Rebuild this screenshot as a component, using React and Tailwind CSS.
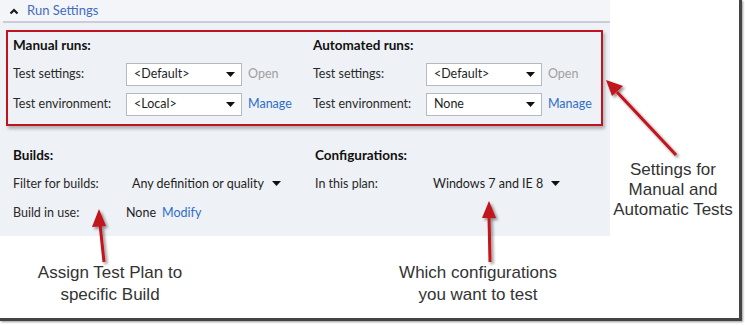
import React from "react";

const ui = { fontFamily: "Lato, 'Noto Sans', sans-serif" };
const note = { fontFamily: "'Liberation Sans', Arial, sans-serif" };

function Caret() {
  return (
    <svg width="10" height="8" viewBox="0 0 10 8">
      <polyline points="1.5,6.5 5,3 8.5,6.5" fill="none" stroke="#1a1a1a" strokeWidth="2.2" />
    </svg>
  );
}

function Tri() {
  return (
    <svg width="9" height="6" viewBox="0 0 9 6">
      <polygon points="0,0 9,0 4.5,5" fill="#111" />
    </svg>
  );
}

function Select({ value }) {
  return (
    <div className="w-[116px] h-[23px] bg-white border border-[#b5b9c0] flex items-center justify-between pl-[7px] pr-[6px] text-[#1e1e1e]">
      <span>{value}</span>
      <Tri />
    </div>
  );
}

function RunColumn({ title, env, className }) {
  return (
    <div className={"flex flex-col " + className}>
      <div className="h-[20px] flex items-center font-bold text-[13.5px] text-[#111]">{title}</div>
      <div className="mt-[8px] flex items-center h-[23px]">
        <span className="w-[113px] text-[#2a2a2a]">Test settings:</span>
        <Select value="<Default>" />
        <span className="ml-[6px] text-[#a0a0a0]">Open</span>
      </div>
      <div className="mt-[7px] flex items-center h-[23px]">
        <span className="w-[113px] text-[#2a2a2a]">Test environment:</span>
        <Select value={env} />
        <span className="ml-[6px] text-[#2f6fc9]">Manage</span>
      </div>
    </div>
  );
}

function Arrows() {
  return (
    <svg className="absolute inset-0 pointer-events-none" width="740" height="319">
      <defs>
        <filter id="sh" x="-50%" y="-50%" width="200%" height="200%">
          <feDropShadow dx="2" dy="2" stdDeviation="1.5" floodColor="#000" floodOpacity="0.45" />
        </filter>
      </defs>
      <g filter="url(#sh)" fill="#c1121f" stroke="#c1121f">
        <line x1="676" y1="155" x2="617" y2="92" strokeWidth="3" />
        <polygon points="606,80 623,86 612,96" stroke="none" />
        <line x1="104" y1="262" x2="100" y2="224" strokeWidth="3" />
        <polygon points="99,209 106,226 92,227" stroke="none" />
        <line x1="490" y1="262" x2="489" y2="216" strokeWidth="3" />
        <polygon points="489,201 496,218 482,218" stroke="none" />
      </g>
    </svg>
  );
}

export default function App() {
  return (
    <div className="w-[745px] h-[325px] bg-white">
      <div className="relative w-[742px] h-[321px] bg-white border-r-[3px] border-b-[3px] border-[#444] shadow-[1px_1px_2px_rgba(0,0,0,0.4)] overflow-hidden">
        <div className="w-[610px] h-[236px] bg-[#eef1f5] text-[12.5px]" style={ui}>
          <div className="h-[21px] bg-[#f4f5f8] flex items-center pl-[9px]">
            <Caret />
            <span className="ml-[8px] text-[#3f6dbf] text-[13px]">Run Settings</span>
          </div>
          <div className="ml-[3px] h-[2px] bg-[#c9ced6]" />
          <div className="mt-[7px] ml-[6px] w-[597px] h-[96px] border-2 border-[#c1121f] shadow-[2px_3px_3px_rgba(0,0,0,0.25)] flex pl-[5px] pt-[3px]">
            <RunColumn title="Manual runs:" env="<Local>" className="w-[302px]" />
            <RunColumn title="Automated runs:" env="None" className="w-[290px]" />
          </div>
          <div className="flex pl-[13px] pt-[19px]">
            <div className="w-[302px] flex flex-col">
              <div className="h-[20px] flex items-center font-bold text-[13.5px] text-[#111]">Builds:</div>
              <div className="mt-[9px] h-[20px] flex items-center">
                <span className="w-[119px] text-[#2a2a2a]">Filter for builds:</span>
                <span className="text-[#1e1e1e]">Any definition or quality</span>
                <span className="ml-[8px] flex"><Tri /></span>
              </div>
              <div className="mt-[9px] h-[20px] flex items-center">
                <span className="w-[113px] text-[#2a2a2a]">Build in use:</span>
                <span className="text-[#1e1e1e]">None</span>
                <span className="ml-[6px] text-[#2f6fc9]">Modify</span>
              </div>
            </div>
            <div className="flex flex-col">
              <div className="h-[20px] flex items-center font-bold text-[13.5px] text-[#111]">Configurations:</div>
              <div className="mt-[9px] h-[20px] flex items-center">
                <span className="w-[118px] text-[#2a2a2a]">In this plan:</span>
                <span className="text-[#1e1e1e]">Windows 7 and IE 8</span>
                <span className="ml-[8px] flex"><Tri /></span>
              </div>
            </div>
          </div>
        </div>

        <Arrows />

        <div className="absolute left-[603px] top-[160px] w-[140px] text-center text-[17px] leading-[20px] text-[#333]" style={note}>
          Settings for<br />Manual and<br />Automatic Tests
        </div>
        <div className="absolute left-[20px] top-[262px] w-[180px] text-center text-[17px] leading-[22px] text-[#333]" style={note}>
          Assign Test Plan to<br />specific Build
        </div>
        <div className="absolute left-[388px] top-[262px] w-[180px] text-center text-[17px] leading-[22px] text-[#333]" style={note}>
          Which configurations<br />you want to test
        </div>
      </div>
    </div>
  );
}
